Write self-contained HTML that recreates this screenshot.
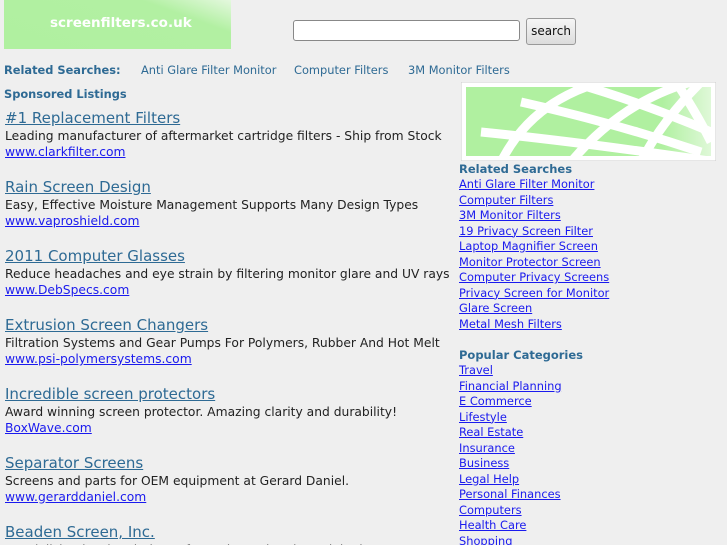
<!DOCTYPE html>
<html style="overflow:hidden;height:545px"><head><meta charset="utf-8"><style>
body{margin:0;background:#efefef;font-family:"DejaVu Sans","Liberation Sans",sans-serif;width:727px;height:545px;overflow:hidden;position:relative}
.logo{position:absolute;left:4px;top:0;width:227px;height:49px;background:linear-gradient(200deg,#e4f8de 0%,#b2f0a2 25%,#b0f0a0 100%);color:#fff;font-size:13.5px;font-weight:bold}
.logo span{position:absolute;left:46px;top:15px}
input{position:absolute;left:293px;top:20px;width:225px;height:19px;border:1px solid #888;border-radius:3px;background:#fff;padding:0;margin:0}
.btn{position:absolute;left:526px;top:18px;width:48px;height:25px;border:1px solid #999;border-radius:3px;background:linear-gradient(#f6f6f6,#dcdcdc);font-size:12px;text-align:center;line-height:25px;color:#111}
.rs{position:absolute;top:63px;font-size:11.4px;color:#2e6a94}
.ad{position:absolute;left:5px}
.ad .t{font-size:15px;color:#2e6a94;text-decoration:underline;display:block;height:20px}
.ad .d{font-size:12.3px;color:#222;display:block;height:16px}
.ad .u{font-size:12.3px;color:#1a1aee;text-decoration:underline;display:block}
.right{position:absolute;left:459px;top:162px;font-size:11.4px}
.right h4{margin:0;font-size:11.5px;color:#2e6a94;height:15px;line-height:15px}
.right a{display:block;color:#1a1aee;text-decoration:underline;height:15.5px;line-height:15.5px}
</style></head><body>
<div class="logo"><span>screenfilters.co.uk</span></div>
<input type="text"><div class="btn">search</div>
<div class="rs" style="left:4px;font-weight:bold">Related Searches:</div>
<div class="rs" style="left:141px">Anti Glare Filter Monitor</div>
<div class="rs" style="left:294px">Computer Filters</div>
<div class="rs" style="left:408px">3M Monitor Filters</div>
<div class="rs" style="left:4px;top:87px;font-weight:bold">Sponsored Listings</div>

<div class="ad" style="top:109px"><span class="t">#1 Replacement Filters</span><span class="d">Leading manufacturer of aftermarket cartridge filters - Ship from Stock</span><span class="u">www.clarkfilter.com</span></div>
<div class="ad" style="top:178px"><span class="t">Rain Screen Design</span><span class="d">Easy, Effective Moisture Management Supports Many Design Types</span><span class="u">www.vaproshield.com</span></div>
<div class="ad" style="top:247px"><span class="t">2011 Computer Glasses</span><span class="d">Reduce headaches and eye strain by filtering monitor glare and UV rays</span><span class="u">www.DebSpecs.com</span></div>
<div class="ad" style="top:316px"><span class="t">Extrusion Screen Changers</span><span class="d">Filtration Systems and Gear Pumps For Polymers, Rubber And Hot Melt</span><span class="u">www.psi-polymersystems.com</span></div>
<div class="ad" style="top:385px"><span class="t">Incredible screen protectors</span><span class="d">Award winning screen protector. Amazing clarity and durability!</span><span class="u">BoxWave.com</span></div>
<div class="ad" style="top:454px"><span class="t">Separator Screens</span><span class="d">Screens and parts for OEM equipment at Gerard Daniel.</span><span class="u">www.gerarddaniel.com</span></div>
<div class="ad" style="top:523px"><span class="t">Beaden Screen, Inc.</span><span class="d">Specializing in wire cloth, perforated metal and specialty items</span></div>

<svg style="position:absolute;left:461px;top:82px" width="255" height="79" viewBox="0 0 255 79">
<rect x="0" y="0" width="255" height="79" fill="#fff" stroke="#ccc"/>
<defs><clipPath id="c"><rect x="5" y="5" width="245" height="69"/></clipPath>
<linearGradient id="g" x1="0" y1="0" x2="1" y2="0"><stop offset="0.8" stop-color="#b0f0a0"/><stop offset="1" stop-color="#dff8d8"/></linearGradient></defs>
<rect x="5" y="5" width="245" height="69" fill="url(#g)"/>
<g clip-path="url(#c)" stroke="#fff" stroke-width="9" fill="none">
<path d="M40 80 Q70 20 140 0"/><path d="M110 80 Q160 20 230 0"/><path d="M180 80 Q200 40 240 0"/>
<path d="M20 50 Q120 60 255 80"/><path d="M60 20 Q150 40 240 70"/><path d="M110 0 Q180 20 250 50"/><path d="M215 0 Q235 30 250 60"/>
</g></svg>

<div class="right">
<h4>Related Searches</h4>
<a>Anti Glare Filter Monitor</a><a>Computer Filters</a><a>3M Monitor Filters</a><a>19 Privacy Screen Filter</a><a>Laptop Magnifier Screen</a><a>Monitor Protector Screen</a><a>Computer Privacy Screens</a><a>Privacy Screen for Monitor</a><a>Glare Screen</a><a>Metal Mesh Filters</a>
<h4 style="margin-top:16px">Popular Categories</h4>
<a>Travel</a><a>Financial Planning</a><a>E Commerce</a><a>Lifestyle</a><a>Real Estate</a><a>Insurance</a><a>Business</a><a>Legal Help</a><a>Personal Finances</a><a>Computers</a><a>Health Care</a><a>Shopping</a>
</div>
</body></html>
